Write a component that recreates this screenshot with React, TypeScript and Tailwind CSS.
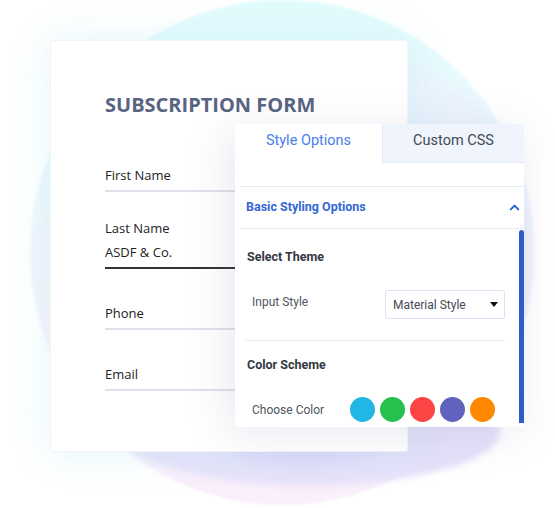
import React from 'react';
import { ChevronUp } from 'lucide-react';

const fields = [
  { label: 'First Name', value: '', active: false, gap: 'mt-0' },
  { label: 'Last Name', value: 'ASDF & Co.', active: true, gap: 'mt-[27px]' },
  { label: 'Phone', value: '', active: false, gap: 'mt-[35px]' },
  { label: 'Email', value: '', active: false, gap: 'mt-[35px]' },
];

const swatches = ['#22b6e6', '#25c04e', '#fd4545', '#6063bd', '#ff8800'];

function Backdrop() {
  return (
    <div className="absolute inset-0 pointer-events-none">
      <div className="absolute left-[30px] top-[0px] w-[505px] h-[505px] rounded-full bg-gradient-to-b from-[#e2fcfd] via-[#f3f5fd] to-[#fbeffb] blur-[1px]" />
      <div className="absolute left-[160px] top-[50px] w-[370px] h-[400px] rounded-full bg-gradient-to-b from-[#eaf6fd] via-[#eff0fd] to-[#ebe6fb] blur-[2px]" />
      <div className="absolute left-[120px] top-[380px] w-[380px] h-[105px] rounded-[50%] bg-[#e6e1fa] blur-[3px]" />
      <div className="absolute left-[210px] top-[395px] w-[190px] h-[70px] rounded-[50%] bg-[#dfd7f8] blur-[4px]" />
    </div>
  );
}

function FormCard() {
  return (
    <div className="ml-[50px] w-[358px] h-[412px] bg-white rounded-[3px] border border-[#f1f5f8] shadow-[0_0_40px_rgba(190,235,242,0.45)] pl-[54px] pt-[52px]">
      <h1 className="text-[20px] leading-[24px] font-bold text-[#586482]">SUBSCRIPTION FORM</h1>
      <div className="mt-[49px] w-[240px]">
        {fields.map((f) => (
          <div key={f.label} className={f.gap}>
            <div className="text-[13px] leading-[18px] text-[#222]">{f.label}</div>
            {f.value && <div className="mt-[6px] text-[13px] leading-[18px] text-[#222]">{f.value}</div>}
            <div className={`mt-[6px] h-[2px] ${f.active ? 'bg-[#333]' : 'bg-[#dde1ea]'}`} />
          </div>
        ))}
      </div>
    </div>
  );
}

function StylePanel() {
  return (
    <div className="absolute left-[235px] top-[124px] w-[289px] h-[303px] bg-white shadow-[-6px_6px_40px_rgba(110,120,170,0.16)] font-['Roboto',sans-serif] overflow-hidden">
      <div className="flex h-[39px]">
        <div className="w-[147px] flex items-center justify-center pb-[5px] text-[14.5px] text-[#4a80e6]">Style Options</div>
        <div className="flex-1 flex items-center justify-center pb-[5px] bg-[#f0f4fd] border-l border-b border-[#e4eaf8] text-[14.5px] text-[#444a55]">Custom CSS</div>
      </div>
      <div className="ml-[5px] mt-[23px] border-t border-b border-[#e4eaf6] h-[43px] flex items-center justify-between pl-[6px] pr-[2px]">
        <span className="text-[12.5px] font-bold text-[#3467d6]">Basic Styling Options</span>
        <ChevronUp className="w-[15px] h-[15px] text-[#2d5fcf]" strokeWidth={3.2} />
      </div>
      <div className="relative ml-[5px] h-[198px]">
        <div className="absolute right-[0px] top-[1px] bottom-[4px] w-[5px] rounded-t-[3px] bg-[#2c5dc8]" />
        <div className="pl-[7px] pr-[19px]">
          <div className="pt-[20px] text-[12.5px] leading-[16px] font-bold text-[#333842]">Select Theme</div>
          <div className="mt-[25px] flex items-start justify-between pl-[5px]">
            <span className="mt-[4px] text-[12px] leading-[16px] text-[#50555f]">Input Style</span>
            <div className="w-[120px] h-[29px] border border-[#dbe4f5] rounded-[2px] flex items-center justify-between pl-[7px] pr-[6px]">
              <span className="text-[12px] text-[#444a55]">Material Style</span>
              <span className="w-0 h-0 border-l-[4px] border-r-[4px] border-t-[5px] border-l-transparent border-r-transparent border-t-[#111]" />
            </div>
          </div>
          <div className="mt-[21px] h-px bg-[#e4eaf6] -ml-[2px]" />
          <div className="mt-[16px] text-[12.5px] leading-[16px] font-bold text-[#333842]">Color Scheme</div>
          <div className="mt-[24px] flex items-center pl-[5px]">
            <span className="text-[12px] text-[#50555f] w-[98px]">Choose Color</span>
            <div className="flex gap-[5px]">
              {swatches.map((c) => (
                <span key={c} className="w-[25px] h-[25px] rounded-full" style={{ backgroundColor: c }} />
              ))}
            </div>
          </div>
        </div>
      </div>
    </div>
  );
}

export default function App() {
  return (
    <div className="relative w-[555px] h-[508px] overflow-hidden bg-white font-['Open_Sans',sans-serif]">
      <Backdrop />
      <div className="relative pt-[40px]">
        <FormCard />
      </div>
      <StylePanel />
    </div>
  );
}
